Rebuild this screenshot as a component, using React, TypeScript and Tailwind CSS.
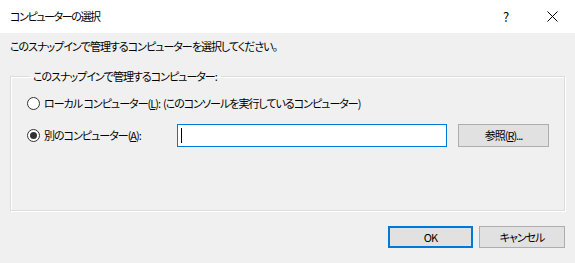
import React from "react";

const font = {
  fontFamily: "'Noto Sans CJK JP', 'Noto Sans', sans-serif",
  fontFeatureSettings: "'palt'",
};

function Radio({ checked }: { checked?: boolean }) {
  return (
    <span className="w-[13px] h-[13px] rounded-full border border-[#333] bg-white flex items-center justify-center shrink-0">
      {checked && <span className="w-[7px] h-[7px] rounded-full bg-[#333]" />}
    </span>
  );
}

export default function App() {
  return (
    <div
      className="w-[575px] h-[263px] flex flex-col bg-[#f0f0f0] text-black text-[11px] tracking-[-1px] leading-none select-none overflow-hidden"
      style={font}
    >
      {/* タイトルバー */}
      <div className="h-[33px] bg-white flex items-center pl-[10px] shrink-0">
        <span className="flex-1 text-[11px] tracking-[-1.4px]">コンピューターの選択</span>
        <span className="w-[46px] text-center text-[13px] tracking-normal">?</span>
        <span className="w-[46px] flex items-center justify-center">
          <svg width="11" height="11" viewBox="0 0 11 11">
            <path d="M0.5 0.5 L10.5 10.5 M10.5 0.5 L0.5 10.5" stroke="#000" strokeWidth="1" />
          </svg>
        </span>
      </div>

      <div className="flex-1 flex flex-col px-[10px]">
        <div className="mt-[7px] h-[13px] flex items-center">
          このスナップインで管理するコンピューターを選択してください。
        </div>

        <fieldset className="mt-[18px] h-[140px] border border-[#dcdcdc] shadow-[inset_1px_1px_0_#fff,1px_1px_0_#fff] pl-[16px] pr-[14px] m-0">
          <legend className="ml-[2px] px-[4px] -mb-[2px]">
            このスナップインで管理するコンピューター:
          </legend>
          <div className="mt-[15px] flex items-center h-[16px]">
            <Radio />
            <span className="ml-[4px]">
              ローカル コンピューター(<u>L</u>):&nbsp; (このコンソールを実行しているコンピューター)
            </span>
          </div>
          <div className="mt-[13px] flex items-center h-[23px]">
            <Radio checked />
            <span className="ml-[4px] w-[133px]">
              別のコンピューター(<u>A</u>):
            </span>
            <div className="w-[270px] h-[23px] bg-white border border-[#0078d7] flex items-center pl-[3px]">
              <span className="w-px h-[15px] bg-black" />
            </div>
            <button className="ml-[11px] w-[91px] h-[23px] bg-[#e1e1e1] border border-[#adadad] flex items-center justify-center">
              参照(<u>R</u>)...
            </button>
          </div>
        </fieldset>

        <div className="mt-[15px] flex justify-end gap-[6px]">
          <button className="w-[85px] h-[22px] bg-[#e1e1e1] border-2 border-[#0078d7] flex items-center justify-center">
            OK
          </button>
          <button className="w-[86px] h-[22px] bg-[#e1e1e1] border border-[#adadad] flex items-center justify-center">
            キャンセル
          </button>
        </div>
      </div>
    </div>
  );
}
